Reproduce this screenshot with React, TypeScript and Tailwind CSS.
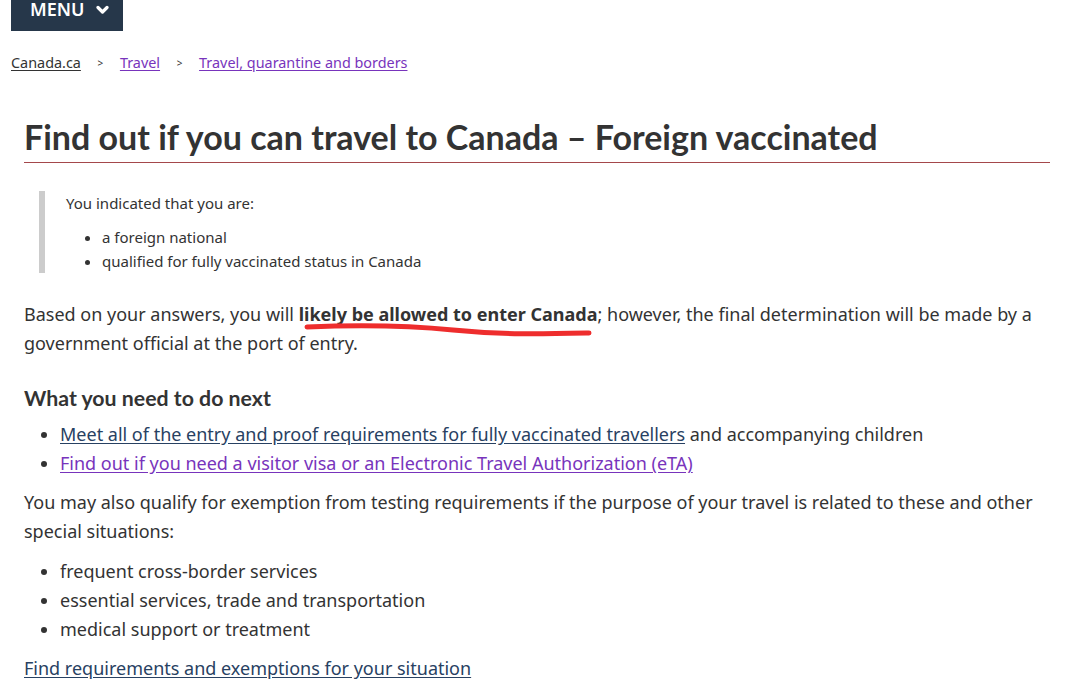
const body = "font-['Noto_Sans',sans-serif]";
const heading = "font-['Lato',sans-serif]";

function Breadcrumb() {
  return (
    <ol className={`${body} mt-[22px] flex items-center px-[11px] text-[14.4px] leading-[20px] text-[#333]`}>
      <li>
        <a href="#" className="text-[#333] underline underline-offset-2">Canada.ca</a>
      </li>
      <li className="flex items-center">
        <span className="w-[39px] text-center text-[10px]">&gt;</span>
        <a href="#" className="text-[#7834bc] underline underline-offset-2">Travel</a>
      </li>
      <li className="flex items-center">
        <span className="w-[39px] text-center text-[10px]">&gt;</span>
        <a href="#" className="text-[#7834bc] underline underline-offset-2">Travel, quarantine and borders</a>
      </li>
    </ol>
  );
}

function App() {
  return (
    <div className="min-h-screen w-full bg-white text-[#333]">
      <button className={`${body} ml-[11px] flex h-[31px] w-[112px] items-start gap-[11px] bg-[#26374a] pl-[19px] text-[18px] font-semibold leading-[19px] text-white`}>
        <span>MENU</span>
        <svg width="13" height="10" viewBox="0 0 13 10" className="mt-[5px]">
          <path d="M2 2.5 L6.5 7 L11 2.5" stroke="white" strokeWidth="3.2" fill="none" strokeLinecap="round" strokeLinejoin="round" />
        </svg>
      </button>

      <Breadcrumb />

      <main className="px-[24px] pr-[18px]">
        <h1 className={`${heading} mt-[43px] border-b border-[#a4474b] pb-[4px] text-[34px] font-bold leading-[42px] text-[#333]`}>
          Find out if you can travel to Canada – Foreign vaccinated
        </h1>

        <div className={`${body} ml-[15px] mt-[28px] border-l-[6px] border-[#cccccc] pl-[21px] text-[15px] leading-[24px]`}>
          <p>You indicated that you are:</p>
          <ul className="mt-[10px] list-disc pl-[36px]">
            <li>a foreign national</li>
            <li>qualified for fully vaccinated status in Canada</li>
          </ul>
        </div>

        <p className={`${body} mt-[27px] text-[18px] leading-[29px]`}>
          Based on your answers, you will{' '}
          <span className="relative font-bold">
            likely be allowed to enter Canada
            <svg
              className="pointer-events-none absolute left-[4px] top-[21px]"
              width="292"
              height="20"
              viewBox="0 0 292 20"
            >
              <path
                d="M4 4 C 50 2, 100 2, 150 7 S 240 11, 286 10"
                stroke="#ee2d2d"
                strokeWidth="5"
                strokeLinecap="round"
                fill="none"
              />
            </svg>
          </span>
          ; however, the final determination will be made by a government official at the port of entry.
        </p>

        <h2 className={`${heading} mt-[24px] text-[21.3px] font-bold leading-[32px] text-[#333]`}>
          What you need to do next
        </h2>

        <ul className={`${body} mt-[6px] list-disc pl-[36px] text-[18px] leading-[29px]`}>
          <li>
            <a href="#" className="text-[#284162] underline underline-offset-2">
              Meet all of the entry and proof requirements for fully vaccinated travellers
            </a>{' '}
            and accompanying children
          </li>
          <li>
            <a href="#" className="text-[#7834bc] underline underline-offset-2">
              Find out if you need a visitor visa or an Electronic Travel Authorization (eTA)
            </a>
          </li>
        </ul>

        <p className={`${body} mt-[10px] text-[18px] leading-[29px]`}>
          You may also qualify for exemption from testing requirements if the purpose of your travel is related to these and other special situations:
        </p>

        <ul className={`${body} mt-[11px] list-disc pl-[36px] text-[18px] leading-[29px]`}>
          <li>frequent cross-border services</li>
          <li>essential services, trade and transportation</li>
          <li>medical support or treatment</li>
        </ul>

        <p className={`${body} mt-[10px] text-[18px] leading-[29px]`}>
          <a href="#" className="text-[#284162] underline underline-offset-2">
            Find requirements and exemptions for your situation
          </a>
        </p>
      </main>
    </div>
  );
}

export default App;
